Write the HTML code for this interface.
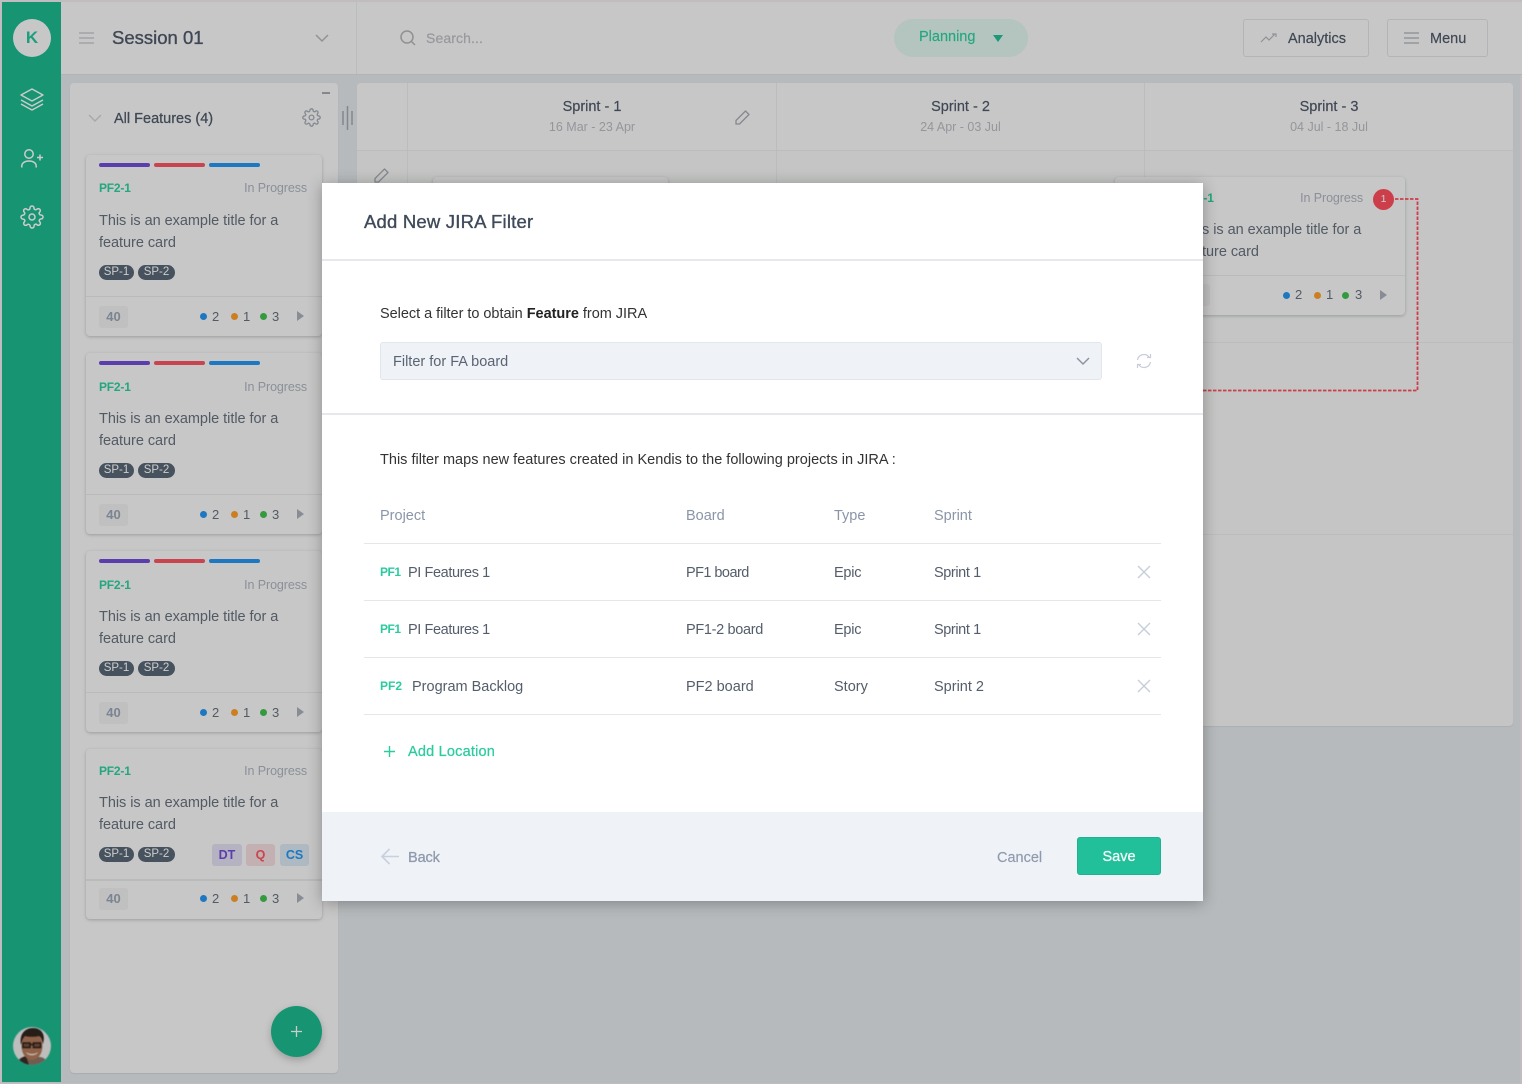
<!DOCTYPE html>
<html><head><meta charset="utf-8"><title>Add New JIRA Filter</title>
<style>
*{box-sizing:border-box}
html,body{margin:0;padding:0;background:#fff}
body{width:1522px;height:1086px;position:relative;overflow:hidden;font-family:"Liberation Sans",sans-serif;color:#4f5a68}
.a,.t{position:absolute}
.t{white-space:nowrap;line-height:20px;height:20px}
svg{position:absolute;overflow:visible;fill:none}
#page{position:absolute;left:0;top:0;width:1522px;height:1084px;background:#e4e9ec;border:2px solid #f0ebef;border-bottom:1px solid #f0ebef;overflow:hidden}
#ov{position:absolute;left:0;top:0;width:1522px;height:1084px;background:rgba(0,0,0,.2)}
.card{position:absolute;background:#f9f9f9;border-radius:4px;box-shadow:0 1px 3px rgba(0,0,0,.22)}
.bar{position:absolute;height:4px;width:51px;border-radius:2px}
.id{color:#2bd19f;font-size:12px;font-weight:bold;letter-spacing:-.2px}
.st{color:#adb4bf;font-size:12.5px;letter-spacing:-.1px}
.ti{color:#67717e;font-size:14.5px;letter-spacing:-.04px}
.pill{position:absolute;height:15px;background:#596777;color:#fff;border-radius:8px;font-size:11.5px;line-height:15px;text-align:center}
.chip{position:absolute;width:29px;height:22px;border-radius:3px;background:#f0f0f1;color:#9aa5b7;font-size:13px;font-weight:bold;line-height:22px;text-align:center}
.dot{position:absolute;width:7px;height:7px;border-radius:50%}
.n{position:absolute;font-size:13px;line-height:20px;color:#67717e}
.tri{position:absolute;width:0;height:0;border-left:7px solid #aab0b9;border-top:5px solid transparent;border-bottom:5px solid transparent}
.hl{position:absolute;height:1px;background:#e8e9e9}
.bl{background:#2596f2}.or{background:#ff9f2b}.gr{background:#40c14f}
.m{color:#545d6b;font-size:14.5px}
.h{color:#8a95a8;font-size:14.5px}
.g{color:#2ccb9e;font-size:12px;font-weight:bold}
.rl{position:absolute;left:42px;width:797px;height:1px;background:#e4e6ea}
.sp{left:0;text-align:center;top:97px;font-size:14.5px;color:#4f5a69;-webkit-text-stroke:.2px #4f5a69}
.dt{text-align:center;top:117px;font-size:12.5px;color:#b9bcc2}
</style></head><body>
<div id="page"></div>

<!-- header -->
<div class="a" style="left:61px;top:2px;width:1461px;height:73px;background:#f9f9f9;border-bottom:1px solid #dfe3e6"></div>
<div class="a" style="left:356px;top:2px;width:1px;height:72px;background:#eaecec"></div>
<svg style="left:79px;top:32px" width="16" height="12" stroke="#c8ccd1" stroke-width="1.5"><path d="M0 1h15M0 6h15M0 11h15"/></svg>
<div class="t" style="left:112px;top:28px;font-size:18.5px;color:#4f5a69;-webkit-text-stroke:.35px #4f5a69">Session 01</div>
<svg style="left:315px;top:34px" width="14" height="9" stroke="#b3b7bc" stroke-width="1.5"><path d="M1 1l6 6 6-6"/></svg>
<svg style="left:400px;top:30px" width="16" height="16" stroke="#b3b5ba" stroke-width="1.5"><circle cx="7" cy="7" r="6"/><path d="M11.500 11.500l3.500 3.500"/></svg>
<div class="t" style="left:426px;top:28px;font-size:14px;color:#bcbec3;-webkit-text-stroke:.2px #bcbec3;letter-spacing:.1px">Search...</div>
<div class="a" style="left:894px;top:19px;width:134px;height:38px;border-radius:19px;background:#e2f5ef"></div>
<div class="t" style="left:919px;top:27px;font-size:14.5px;color:#2bd19f;-webkit-text-stroke:.15px #2bd19f">Planning</div>
<div class="a" style="left:993px;top:35px;width:0;height:0;border-top:7px solid #25c095;border-left:5px solid transparent;border-right:5px solid transparent"></div>
<div class="a" style="left:1243px;top:19px;width:126px;height:38px;border:1px solid #dfe2e4;border-radius:3px"></div>
<svg style="left:1261px;top:33px" width="16" height="10" stroke="#b3b7bc" stroke-width="1.2"><path d="M0 9l5-5 3 3 6-6M11 1h4v3"/></svg>
<div class="t" style="left:1288px;top:28.500px;font-size:14.5px;color:#4f5a69;-webkit-text-stroke:.2px #4f5a69">Analytics</div>
<div class="a" style="left:1387px;top:19px;width:101px;height:38px;border:1px solid #dfe2e4;border-radius:3px"></div>
<svg style="left:1404px;top:32px" width="16" height="12" stroke="#babdc3" stroke-width="1.5"><path d="M0 1h15M0 6h15M0 11h15"/></svg>
<div class="t" style="left:1430px;top:28.500px;font-size:14.5px;color:#4f5a69;-webkit-text-stroke:.2px #4f5a69">Menu</div>

<!-- sidebar -->
<div class="a" style="left:2px;top:2px;width:59px;height:1080px;background:#1dbb90"></div>
<div class="a" style="left:13px;top:19px;width:38px;height:38px;border-radius:50%;background:#f9f9f9;color:#26c69b;font-size:17px;font-weight:bold;text-align:center;line-height:38px">K</div>
<svg style="left:20px;top:88px" width="24" height="23" stroke="#fff" stroke-width="1.4" stroke-linejoin="round"><path d="M12 1L1 7l11 6 11-6z"/><path d="M1 12l11 6 11-6M1 16l11 6 11-6"/></svg>
<svg style="left:21px;top:149px" width="22" height="19" stroke="#fff" stroke-width="1.5"><circle cx="8" cy="5" r="4.200"/><path d="M0.800 18.500v-1.500c0-3 3-5 7.200-5s7.200 2 7.200 5v1.500M16 8.500h6M19 5.500v6"/></svg>
<svg style="left:20px;top:205px" width="24" height="24" viewBox="0 0 24 24" stroke="#fff" stroke-width="1.500" stroke-linejoin="round"><circle cx="12" cy="12" r="3"/><path d="M19.400 15a1.650 1.650 0 0 0 .33 1.820l.06.06a2 2 0 0 1 0 2.830 2 2 0 0 1-2.830 0l-.06-.06a1.650 1.650 0 0 0-1.820-.33 1.650 1.650 0 0 0-1 1.510V21a2 2 0 0 1-2 2 2 2 0 0 1-2-2v-.09A1.650 1.650 0 0 0 9 19.400a1.650 1.650 0 0 0-1.820.33l-.06.06a2 2 0 0 1-2.830 0 2 2 0 0 1 0-2.830l.06-.06a1.650 1.650 0 0 0 .33-1.820 1.650 1.650 0 0 0-1.510-1H3a2 2 0 0 1-2-2 2 2 0 0 1 2-2h.09A1.650 1.650 0 0 0 4.600 9a1.650 1.650 0 0 0-.33-1.820l-.06-.06a2 2 0 0 1 0-2.830 2 2 0 0 1 2.830 0l.06.06a1.650 1.650 0 0 0 1.820.33H9a1.650 1.650 0 0 0 1-1.510V3a2 2 0 0 1 2-2 2 2 0 0 1 2 2v.09a1.650 1.650 0 0 0 1 1.510 1.650 1.650 0 0 0 1.820-.33l.06-.06a2 2 0 0 1 2.830 0 2 2 0 0 1 0 2.830l-.06.06a1.650 1.650 0 0 0-.33 1.820V9a1.650 1.650 0 0 0 1.510 1H21a2 2 0 0 1 2 2 2 2 0 0 1-2 2h-.09a1.650 1.650 0 0 0-1.510 1z"/></svg>
<svg style="left:13px;top:1027px;filter:blur(.5px)" width="38" height="38" viewBox="0 0 38 38"><defs><clipPath id="av"><circle cx="19" cy="19" r="19"/></clipPath></defs><g clip-path="url(#av)"><rect width="38" height="38" fill="#eeeeec"/><path d="M3 38c1-6 5-8 9-8h14c4 0 8 2 9 8z" fill="#8e7466"/><path d="M5 38c1-5 3-8 8-9l3 9z" fill="#3a2c28"/><ellipse cx="19" cy="19" rx="10.500" ry="14" fill="#b47a58"/><path d="M8 18C6 7 12 1 20 1s13 6 10 16c-1-4-2-7-4-8-4 1-10 1-14 0-2 2-3 5-4 9z" fill="#30241f"/><path d="M10 16h7v4.500h-7zM20.500 16h7v4.500h-7zM17 17.500h3.500" stroke="#2a211e" stroke-width="1.500" fill="#7c523c"/><path d="M13 25c3 2.500 9 2.500 12 0-1 4.500-11 4.500-12 0z" fill="#f1e6de"/></g></svg>

<!-- features panel -->
<div class="a" style="left:70px;top:83px;width:268px;height:990px;background:#f9f9f9;border-radius:4px;box-shadow:0 1px 1px rgba(0,0,0,.08)"></div>
<div class="a" style="left:322px;top:92px;width:8px;height:2px;background:#a6aab0"></div>
<svg style="left:88px;top:114px" width="14" height="9" stroke="#ced3d9" stroke-width="1.4"><path d="M1 1l6 6 6-6"/></svg>
<div class="t" style="left:114px;top:108.500px;font-size:14.5px;color:#4f5a69;-webkit-text-stroke:.25px #4f5a69">All Features (4)</div>
<svg style="left:302px;top:108px" width="19" height="19" viewBox="0 0 24 24" stroke="#a6acb4" stroke-width="1.700" stroke-linejoin="round"><circle cx="12" cy="12" r="3"/><path d="M19.400 15a1.650 1.650 0 0 0 .33 1.820l.06.06a2 2 0 0 1 0 2.830 2 2 0 0 1-2.830 0l-.06-.06a1.650 1.650 0 0 0-1.820-.33 1.650 1.650 0 0 0-1 1.510V21a2 2 0 0 1-2 2 2 2 0 0 1-2-2v-.09A1.650 1.650 0 0 0 9 19.400a1.650 1.650 0 0 0-1.820.33l-.06.06a2 2 0 0 1-2.830 0 2 2 0 0 1 0-2.830l.06-.06a1.650 1.650 0 0 0 .33-1.820 1.650 1.650 0 0 0-1.510-1H3a2 2 0 0 1-2-2 2 2 0 0 1 2-2h.09A1.650 1.650 0 0 0 4.600 9a1.650 1.650 0 0 0-.33-1.820l-.06-.06a2 2 0 0 1 0-2.830 2 2 0 0 1 2.830 0l.06.06a1.650 1.650 0 0 0 1.820.33H9a1.650 1.650 0 0 0 1-1.510V3a2 2 0 0 1 2-2 2 2 0 0 1 2 2v.09a1.650 1.650 0 0 0 1 1.510 1.650 1.650 0 0 0 1.820-.33l.06-.06a2 2 0 0 1 2.830 0 2 2 0 0 1 0 2.830l-.06.06a1.650 1.650 0 0 0-.33 1.820V9a1.650 1.650 0 0 0 1.510 1H21a2 2 0 0 1 2 2 2 2 0 0 1-2 2h-.09a1.650 1.650 0 0 0-1.510 1z"/></svg>
<svg style="left:342px;top:105px" width="12" height="26" stroke="#a6aab0" stroke-width="1.500"><path d="M1 6v14M5.500 1v24M10 6v14"/></svg>

<!-- card 1 -->
<div class="card" style="left:86px;top:155px;width:236px;height:181px"></div>
<div class="bar" style="left:99px;top:163px;background:#724dd6"></div><div class="bar" style="left:154px;top:163px;background:#fb5562"></div><div class="bar" style="left:209px;top:163px;background:#2596f2"></div>
<div class="t id" style="left:99px;top:178px">PF2-1</div><div class="t st" style="right:1215px;top:178px">In Progress</div>
<div class="t ti" style="left:99px;top:211px">This is an example title for a</div><div class="t ti" style="left:99px;top:233px">feature card</div>
<div class="pill" style="left:99px;top:265px;width:35px">SP-1</div><div class="pill" style="left:138px;top:265px;width:37px">SP-2</div>
<div class="hl" style="left:86px;top:296px;width:236px"></div><div class="chip" style="left:99px;top:306px">40</div>
<div class="dot bl" style="left:200px;top:313px"></div><div class="n" style="left:212px;top:307px">2</div>
<div class="dot or" style="left:231px;top:313px"></div><div class="n" style="left:243px;top:307px">1</div>
<div class="dot gr" style="left:260px;top:313px"></div><div class="n" style="left:272px;top:307px">3</div>
<div class="tri" style="left:297px;top:311px"></div>

<!-- card 2 -->
<div class="card" style="left:86px;top:353px;width:236px;height:181px"></div>
<div class="bar" style="left:99px;top:361px;background:#724dd6"></div><div class="bar" style="left:154px;top:361px;background:#fb5562"></div><div class="bar" style="left:209px;top:361px;background:#2596f2"></div>
<div class="t id" style="left:99px;top:377px">PF2-1</div><div class="t st" style="right:1215px;top:377px">In Progress</div>
<div class="t ti" style="left:99px;top:409px">This is an example title for a</div><div class="t ti" style="left:99px;top:431px">feature card</div>
<div class="pill" style="left:99px;top:463px;width:35px">SP-1</div><div class="pill" style="left:138px;top:463px;width:37px">SP-2</div>
<div class="hl" style="left:86px;top:494px;width:236px"></div><div class="chip" style="left:99px;top:504px">40</div>
<div class="dot bl" style="left:200px;top:511px"></div><div class="n" style="left:212px;top:505px">2</div>
<div class="dot or" style="left:231px;top:511px"></div><div class="n" style="left:243px;top:505px">1</div>
<div class="dot gr" style="left:260px;top:511px"></div><div class="n" style="left:272px;top:505px">3</div>
<div class="tri" style="left:297px;top:509px"></div>

<!-- card 3 -->
<div class="card" style="left:86px;top:551px;width:236px;height:181px"></div>
<div class="bar" style="left:99px;top:559px;background:#724dd6"></div><div class="bar" style="left:154px;top:559px;background:#fb5562"></div><div class="bar" style="left:209px;top:559px;background:#2596f2"></div>
<div class="t id" style="left:99px;top:575px">PF2-1</div><div class="t st" style="right:1215px;top:575px">In Progress</div>
<div class="t ti" style="left:99px;top:607px">This is an example title for a</div><div class="t ti" style="left:99px;top:629px">feature card</div>
<div class="pill" style="left:99px;top:661px;width:35px">SP-1</div><div class="pill" style="left:138px;top:661px;width:37px">SP-2</div>
<div class="hl" style="left:86px;top:692px;width:236px"></div><div class="chip" style="left:99px;top:702px">40</div>
<div class="dot bl" style="left:200px;top:709px"></div><div class="n" style="left:212px;top:703px">2</div>
<div class="dot or" style="left:231px;top:709px"></div><div class="n" style="left:243px;top:703px">1</div>
<div class="dot gr" style="left:260px;top:709px"></div><div class="n" style="left:272px;top:703px">3</div>
<div class="tri" style="left:297px;top:707px"></div>

<!-- card 4 -->
<div class="card" style="left:86px;top:749px;width:236px;height:170px"></div>
<div class="t id" style="left:99px;top:761px">PF2-1</div><div class="t st" style="right:1215px;top:761px">In Progress</div>
<div class="t ti" style="left:99px;top:793px">This is an example title for a</div><div class="t ti" style="left:99px;top:815px">feature card</div>
<div class="pill" style="left:99px;top:847px;width:35px">SP-1</div><div class="pill" style="left:138px;top:847px;width:37px">SP-2</div>
<div class="a" style="left:212px;top:844px;width:30px;height:22px;border-radius:3px;background:#e3dff2;color:#724dd6;font-size:12.5px;font-weight:bold;line-height:22px;text-align:center">DT</div>
<div class="a" style="left:246px;top:844px;width:29px;height:22px;border-radius:3px;background:#f4dddf;color:#fb5562;font-size:12.5px;font-weight:bold;line-height:22px;text-align:center">Q</div>
<div class="a" style="left:280px;top:844px;width:29px;height:22px;border-radius:3px;background:#dae8f2;color:#2596f2;font-size:12.5px;font-weight:bold;line-height:22px;text-align:center">CS</div>
<div class="hl" style="left:86px;top:879px;width:236px;height:2px"></div><div class="chip" style="left:99px;top:888px">40</div>
<div class="dot bl" style="left:200px;top:895px"></div><div class="n" style="left:212px;top:889px">2</div>
<div class="dot or" style="left:231px;top:895px"></div><div class="n" style="left:243px;top:889px">1</div>
<div class="dot gr" style="left:260px;top:895px"></div><div class="n" style="left:272px;top:889px">3</div>
<div class="tri" style="left:297px;top:893px"></div>

<!-- FAB -->
<div class="a" style="left:271px;top:1006px;width:51px;height:51px;border-radius:50%;background:#1dbb90;box-shadow:0 3px 8px rgba(0,0,0,.22)"></div>
<svg style="left:291px;top:1026px" width="11" height="11" stroke="#fff" stroke-width="1.3"><path d="M0 5.500h11M5.500 0v11"/></svg>

<!-- board -->
<div class="a" style="left:357px;top:83px;width:1156px;height:643px;background:#f5f7f6;border-radius:4px;box-shadow:0 1px 1px rgba(0,0,0,.06)"></div>
<div class="a" style="left:357px;top:83px;width:1156px;height:68px;background:#f9f9f9;border-bottom:1px solid #eaecec;border-radius:4px 4px 0 0"></div>
<div class="a" style="left:407px;top:83px;width:1px;height:643px;background:#eaecec"></div>
<div class="a" style="left:776px;top:83px;width:1px;height:643px;background:#eaecec"></div>
<div class="a" style="left:1144px;top:83px;width:1px;height:643px;background:#eaecec"></div>
<div class="a" style="left:357px;top:342px;width:1156px;height:1px;background:#eaecec"></div>
<div class="a" style="left:357px;top:534px;width:1156px;height:1px;background:#eaecec"></div>
<div class="t sp" style="left:408px;width:368px">Sprint - 1</div>
<div class="t dt" style="left:408px;width:368px">16 Mar - 23 Apr</div>
<div class="t sp" style="left:777px;width:367px">Sprint - 2</div>
<div class="t dt" style="left:777px;width:367px">24 Apr - 03 Jul</div>
<div class="t sp" style="left:1145px;width:368px">Sprint - 3</div>
<div class="t dt" style="left:1145px;width:368px">04 Jul - 18 Jul</div>
<svg style="left:735px;top:110px" width="15" height="15" stroke="#a6aab2" stroke-width="1.3" stroke-linejoin="round"><path d="M1 10.500L10.500 1l3.500 3.500L4.500 14H1z"/></svg>
<svg style="left:374px;top:168px" width="15" height="15" stroke="#a6aab2" stroke-width="1.3" stroke-linejoin="round"><path d="M1 10.500L10.500 1l3.500 3.500L4.500 14H1z"/></svg>
<div class="card" style="left:433px;top:177px;width:235px;height:20px"></div>

<!-- sprint-3 card -->
<div class="card" style="left:1115px;top:177px;width:290px;height:138px"></div>
<div class="t id" style="left:1182px;top:188px">PF2-1</div>
<div class="t st" style="right:159px;top:188px">In Progress</div>
<div class="t ti" style="left:1182px;top:220px">This is an example title for a</div><div class="t ti" style="left:1182px;top:242px">feature card</div>
<div class="hl" style="left:1115px;top:275px;width:290px"></div>
<div class="chip" style="left:1181px;top:284px"></div>
<div class="dot bl" style="left:1283px;top:292px"></div><div class="n" style="left:1295px;top:285px">2</div>
<div class="dot or" style="left:1314px;top:292px"></div><div class="n" style="left:1326px;top:285px">1</div>
<div class="dot gr" style="left:1342px;top:292px"></div><div class="n" style="left:1355px;top:285px">3</div>
<div class="tri" style="left:1380px;top:290px"></div>
<div class="a" style="left:1373px;top:189px;width:21px;height:21px;border-radius:50%;background:#ff4e5d;color:#fff;font-size:10.5px;text-align:center;line-height:21px">1</div>
<svg style="left:1200px;top:198px" width="222" height="196" stroke="#ff4e5d" stroke-width="1.800" stroke-dasharray="3.500 1.500"><path d="M195 1h22.500v191.500H0"/></svg>

<div id="ov"></div>

<!-- modal -->
<div class="a" style="left:322px;top:183px;width:881px;height:718px;background:#fff;box-shadow:0 2px 14px rgba(0,0,0,.3)">
<div class="t" style="left:42px;top:29px;font-size:18.5px;letter-spacing:.2px;color:#3f4a5a;-webkit-text-stroke:.35px #3f4a5a">Add New JIRA Filter</div>
<div class="a" style="left:0;top:76px;width:881px;height:1.5px;background:#e6e8eb"></div>
<div class="t" style="left:58px;top:121px;font-size:14.5px;letter-spacing:-.03px;color:#333">Select a filter to obtain <b style="color:#222">Feature</b> from JIRA</div>
<div class="a" style="left:58px;top:159px;width:722px;height:38px;background:#eff2f7;border:1px solid #e2e6ec;border-radius:3px"></div>
<div class="t" style="left:71px;top:169px;font-size:14.5px;color:#5b6472">Filter for FA board</div>
<svg style="left:754px;top:174px" width="14" height="9" stroke="#8e959f" stroke-width="1.500"><path d="M1 1l6 6 6-6"/></svg>
<svg style="left:814px;top:170px" width="16" height="16" viewBox="0 0 16 16" stroke="#c7ced9" stroke-width="1.200"><path d="M1.500 7A6.500 6.500 0 0 1 13 4M14.500 1v3.500H11M14.500 9A6.500 6.500 0 0 1 3 12M1.500 15v-3.500H5"/></svg>
<div class="a" style="left:0;top:230px;width:881px;height:1.5px;background:#e6e8eb"></div>
<div class="t" style="left:58px;top:267px;font-size:14.5px;letter-spacing:.01px;color:#333">This filter maps new features created in Kendis to the following projects in JIRA :</div>
<div class="t h" style="left:58px;top:323px">Project</div><div class="t h" style="left:364px;top:323px">Board</div><div class="t h" style="left:512px;top:323px">Type</div><div class="t h" style="left:612px;top:323px">Sprint</div>
<div class="rl" style="top:360px"></div>
<div class="t g" style="left:58px;top:379px;letter-spacing:-.5px">PF1</div><div class="t m" style="left:86px;top:380px;letter-spacing:-.4px">PI Features 1</div><div class="t m" style="left:364px;top:380px;letter-spacing:-.55px">PF1 board</div><div class="t m" style="left:512px;top:380px;letter-spacing:-.25px">Epic</div><div class="t m" style="left:612px;top:380px;letter-spacing:-.4px">Sprint 1</div>
<svg style="left:815px;top:381.500px" width="14" height="14" stroke="#c7ced9" stroke-width="1.400"><path d="M1 1l12 12M13 1L1 13"/></svg>
<div class="rl" style="top:417px"></div>
<div class="t g" style="left:58px;top:436px;letter-spacing:-.5px">PF1</div><div class="t m" style="left:86px;top:437px;letter-spacing:-.4px">PI Features 1</div><div class="t m" style="left:364px;top:437px;letter-spacing:-.33px">PF1-2 board</div><div class="t m" style="left:512px;top:437px;letter-spacing:-.25px">Epic</div><div class="t m" style="left:612px;top:437px;letter-spacing:-.4px">Sprint 1</div>
<svg style="left:815px;top:438.500px" width="14" height="14" stroke="#c7ced9" stroke-width="1.400"><path d="M1 1l12 12M13 1L1 13"/></svg>
<div class="rl" style="top:474px"></div>
<div class="t g" style="left:58px;top:493px">PF2</div><div class="t m" style="left:90px;top:494px">Program Backlog</div><div class="t m" style="left:364px;top:494px">PF2 board</div><div class="t m" style="left:512px;top:494px">Story</div><div class="t m" style="left:612px;top:494px">Sprint 2</div>
<svg style="left:815px;top:495.500px" width="14" height="14" stroke="#c7ced9" stroke-width="1.400"><path d="M1 1l12 12M13 1L1 13"/></svg>
<div class="rl" style="top:531px"></div>
<svg style="left:62px;top:563px" width="11" height="11" stroke="#2ccb9e" stroke-width="1.400"><path d="M0 5.500h11M5.500 0v11"/></svg>
<div class="t" style="left:86px;top:559px;font-size:14.5px;letter-spacing:.2px;color:#2ccb9e;-webkit-text-stroke:.25px #2ccb9e">Add Location</div>
<div class="a" style="left:0;top:629px;width:881px;height:89px;background:#eff2f7"></div>
<svg style="left:59px;top:665px" width="18" height="17" stroke="#c7d0dd" stroke-width="1.600"><path d="M18 8.500H1M8.500 1L1 8.500 8.500 16"/></svg>
<div class="t" style="left:86px;top:664.500px;font-size:14.5px;letter-spacing:-.1px;color:#8f9aad;-webkit-text-stroke:.3px #8f9aad">Back</div>
<div class="t" style="left:675px;top:664.500px;font-size:14.5px;color:#8f9aad;-webkit-text-stroke:.15px #8f9aad">Cancel</div>
<div class="a" style="left:755px;top:654px;width:84px;height:38px;background:#22c09a;border-radius:3px;border:1px solid #1eb28e;color:#f2fbf8;font-size:14.5px;-webkit-text-stroke:.3px #f2fbf8;text-align:center;line-height:39px">Save</div>
</div>
</body></html>
